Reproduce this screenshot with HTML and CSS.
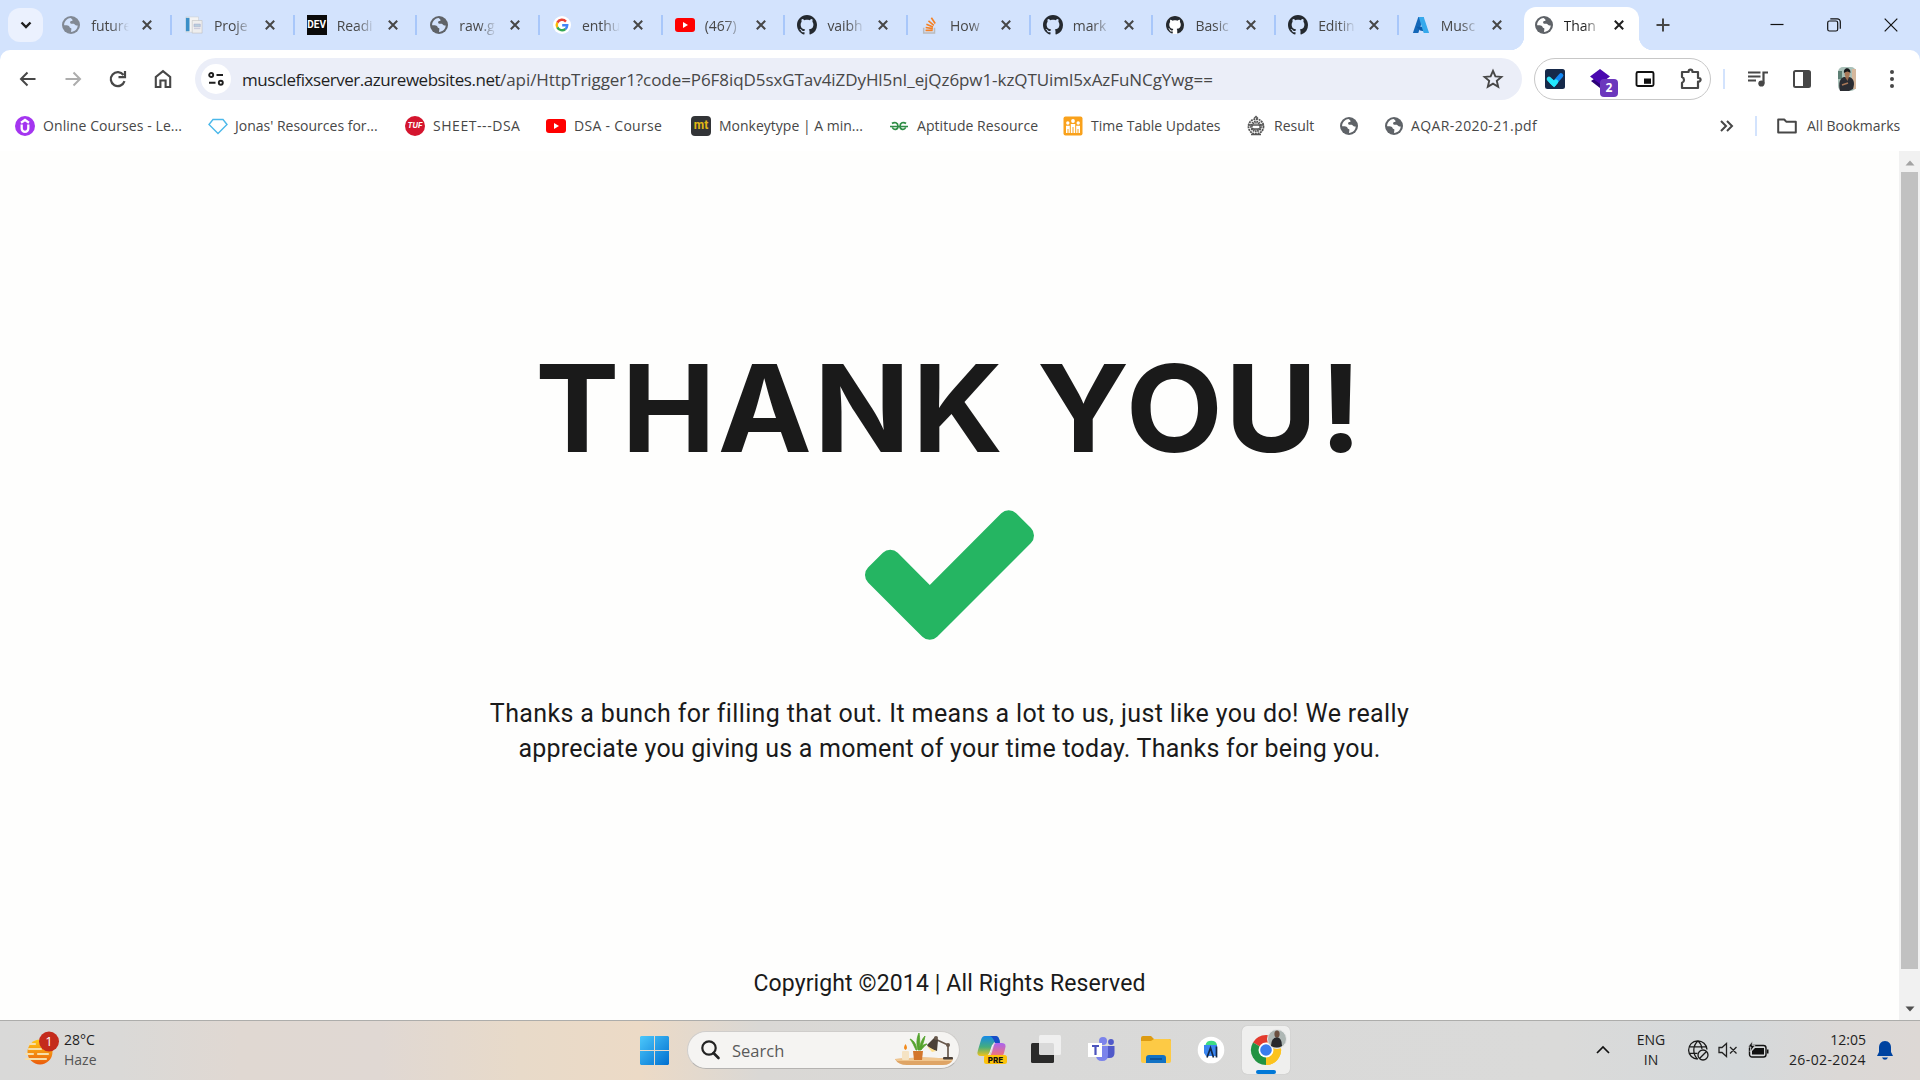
FILE: index.html
```html
<!DOCTYPE html>
<html lang="en">
<head>
<meta charset="utf-8">
<title>Thank You</title>
<link rel="stylesheet" href="styles.css">
</head>
<body>
<svg class="defs" aria-hidden="true">
  <symbol id="globe" viewBox="0 0 18 18"><circle cx="9" cy="9" r="9" fill="#5f6368"/><path d="M8.6 2c-2 .2-3.700 1-5 2.800C2 7 2 8.500 2.200 9.300c1.600-.3 3.800-.2 5 .9.600 1 .2 1.400 1.500 1.700.9.200.7 1.300.5 2.300l-.2 1.700c3.800-.2 6.600-3.200 6.700-6.500-1.300.1-2 .3-2.700-.6-.7-1-1.200-1.200-2.400-1.100-1.600.1-2.500-.3-2.500-1.300 0-1 .8-1.200 1.700-1.300.9-.2.900-.8.500-1.500-.4-.6-1-1.100-1.700-1.600z" fill="currentColor"/></symbol>
  <symbol id="close" viewBox="0 0 10 10"><path d="M.8.800l8.400 8.400M9.200.8L.8 9.200" stroke="currentColor" stroke-width="2" fill="none"/></symbol>
  <symbol id="github" viewBox="0 0 16 16"><path fill="#24292f" d="M8 0C3.580 0 0 3.580 0 8c0 3.540 2.290 6.530 5.470 7.590.4.070.55-.17.55-.38 0-.19-.01-.82-.01-1.490-2.010.37-2.530-.49-2.690-.94-.09-.23-.48-.94-.82-1.130-.28-.15-.68-.52-.01-.53.63-.01 1.080.58 1.230.82.72 1.210 1.870.87 2.330.66.070-.52.28-.87.51-1.070-1.780-.2-3.640-.89-3.640-3.950 0-.87.31-1.590.82-2.150-.08-.2-.36-1.020.08-2.120 0 0 .67-.21 2.200.82.64-.18 1.320-.27 2-.27s1.360.09 2 .27c1.530-1.040 2.200-.82 2.200-.82.44 1.100.16 1.920.08 2.120.51.56.82 1.270.82 2.150 0 3.070-1.870 3.750-3.650 3.950.29.25.54.73.54 1.480 0 1.070-.01 1.930-.01 2.200 0 .21.15.46.55.38A8.010 8.010 0 0 0 16 8c0-4.420-3.580-8-8-8z"/></symbol>
  <symbol id="youtube" viewBox="0 0 20 20"><rect y="3" width="20" height="14" rx="3" fill="#f00"/><path d="M8 7l5 3-5 3z" fill="#fff"/></symbol>
</svg>

<header class="tabstrip">
  <div class="tab-search"><svg width="12" height="8" viewBox="0 0 12 8"><path d="M1.500 1.500L6 6l4.500-4.500" fill="none" stroke="#1f1f1f" stroke-width="2.400"/></svg></div>
  <div class="tab"><svg class="fav dim"><use href="#globe"/></svg><span class="tab-title">future</span><svg class="x"><use href="#close"/></svg></div>
  <div class="tab"><svg class="fav" viewBox="0 0 20 20"><path d="M1 1h14v17H1z" fill="#f4f4f4" stroke="#c9ccd0" stroke-width=".6"/><path d="M1 2h4v15H1z" fill="#3b8fc8"/><path d="M8 5h11v14H8z" fill="#eee" stroke="#bbb" stroke-width=".6"/><path d="M10 9h7v3h-7zM10 14h7" fill="#b9cfdd" stroke="#aac" stroke-width=".6"/></svg><span class="tab-title">Proje</span><svg class="x"><use href="#close"/></svg></div>
  <div class="tab"><span class="fav dev">DEV</span><span class="tab-title">Readi</span><svg class="x"><use href="#close"/></svg></div>
  <div class="tab"><svg class="fav"><use href="#globe"/></svg><span class="tab-title">raw.g</span><svg class="x"><use href="#close"/></svg></div>
  <div class="tab"><svg class="fav" viewBox="0 0 20 20"><circle cx="10" cy="10" r="10" fill="#fff"/><g fill="none" stroke-width="2.700"><path d="M14.400 6.200A5.900 5.900 0 0 0 4.800 7.300" stroke="#ea4335"/><path d="M4.800 7.300a5.900 5.900 0 0 0 0 5.400" stroke="#fbbc05"/><path d="M4.800 12.700a5.900 5.900 0 0 0 9 1.800" stroke="#34a853"/><path d="M13.800 14.500a5.900 5.900 0 0 0 2-4.300h-5.600" stroke="#4285f4"/></g></svg><span class="tab-title">enthu</span><svg class="x"><use href="#close"/></svg></div>
  <div class="tab"><svg class="fav wide"><use href="#youtube"/></svg><span class="tab-title">(467)</span><svg class="x"><use href="#close"/></svg></div>
  <div class="tab"><svg class="fav wide"><use href="#github"/></svg><span class="tab-title">vaibh</span><svg class="x"><use href="#close"/></svg></div>
  <div class="tab"><svg class="fav" viewBox="0 0 20 20"><path d="M3 13v6h12v-6" fill="none" stroke="#bcbbbb" stroke-width="1.700"/><path d="M5 16h8M5.200 12.800l8 1.200M6 9.300l7.300 3M8.300 5.500l6 4.900M11.500 2l4.300 6.400" stroke="#f48024" stroke-width="1.800"/></svg><span class="tab-title">How</span><svg class="x"><use href="#close"/></svg></div>
  <div class="tab"><svg class="fav wide"><use href="#github"/></svg><span class="tab-title">mark</span><svg class="x"><use href="#close"/></svg></div>
  <div class="tab"><svg class="fav halo"><use href="#github"/></svg><span class="tab-title">Basic</span><svg class="x"><use href="#close"/></svg></div>
  <div class="tab"><svg class="fav wide"><use href="#github"/></svg><span class="tab-title">Editin</span><svg class="x"><use href="#close"/></svg></div>
  <div class="tab last"><svg class="fav" viewBox="0 0 20 20"><path d="M7 1h6L7 19H1z" fill="#1467b8"/><path d="M5 12h10l-2 5-4-1z" fill="#0a5bab"/><path d="M7.500 1H13l6 18h-6z" fill="#36a9ec"/></svg><span class="tab-title">Musc</span><svg class="x"><use href="#close"/></svg></div>
  <div class="tab active"><svg class="fav"><use href="#globe"/></svg><span class="tab-title">Than</span><svg class="x"><use href="#close"/></svg></div>
  <svg class="plus" viewBox="0 0 14 14"><path d="M7 .5v13M.5 7h13" stroke="#474747" stroke-width="2"/></svg>
  <div class="window-buttons">
    <svg viewBox="0 0 14 14"><path d="M.5 6.500h13" stroke="#111" stroke-width="1.200"/></svg>
    <svg viewBox="0 0 14 14"><rect x=".7" y="3" width="10" height="10" rx="1.800" fill="none" stroke="#111" stroke-width="1.200"/><path d="M3.300.8h7a3 3 0 0 1 3 3v7" fill="none" stroke="#111" stroke-width="1.200"/></svg>
    <svg viewBox="0 0 14 14"><path d="M.7.700l12.600 12.600M13.300.7L.7 13.300" stroke="#111" stroke-width="1.200"/></svg>
  </div>
</header>

<div class="toolbar-wrap">
<nav class="toolbar">
  <svg class="nav-ic" viewBox="0 0 20 20"><path d="M17.500 10H3.500M9.500 3.500L3 10l6.500 6.500" fill="none" stroke="#474747" stroke-width="2"/></svg>
  <svg class="nav-ic" viewBox="0 0 20 20"><path d="M2.500 10h14M10.500 3.500L17 10l-6.500 6.500" fill="none" stroke="#adadad" stroke-width="2"/></svg>
  <svg class="nav-ic" viewBox="0 0 20 20"><path d="M16.500 12.200A7 7 0 1 1 15.500 6M17 2v6.200h-6.500" fill="none" stroke="#474747" stroke-width="2.200"/></svg>
  <svg class="nav-ic" viewBox="0 0 20 20"><path d="M2.800 18V8L10 2.200 17.200 8v10h-4.600v-6.500H7.400V18z" fill="none" stroke="#474747" stroke-width="2.100"/></svg>
  <div class="omnibox">
    <div class="site-info"><svg width="16" height="14" viewBox="0 0 16 14"><g fill="none" stroke="#1f1f1f" stroke-width="1.900"><circle cx="3.200" cy="3" r="2"/><path d="M8.500 3H15M1 10.800h6.500"/><circle cx="12.800" cy="10.800" r="2"/></g></svg></div>
    <span class="url"><b>musclefixserver.azurewebsites.net</b>/api/HttpTrigger1?code=P6F8iqD5sxGTav4iZDyHl5nI_ejQz6pw1-kzQTUiml5xAzFuNCgYwg==</span>
    <svg class="star" viewBox="0 0 20 20"><path d="M10 1.800l2.400 5.600 6 .5-4.600 4 1.400 5.900L10 14.700l-5.200 3.100 1.400-5.900-4.600-4 6-.5z" fill="none" stroke="#474747" stroke-width="1.900"/></svg>
  </div>
  <div class="extensions">
    <svg viewBox="0 0 20 20"><rect width="20" height="20" rx="2.500" fill="#16294a"/><path d="M4 10l5 5" stroke="#2fe0f5" stroke-width="4.600" stroke-linecap="round"/><path d="M9 14.500l7-8" stroke="#1388f5" stroke-width="4.600" stroke-linecap="round"/><path d="M6.500 12.500L9 15l2-2.300" stroke="#22e8ff" stroke-width="4.600" stroke-linecap="round" fill="none"/></svg>
    <div class="ext-badged"><svg viewBox="0 0 20 20"><path d="M10 6l9 6-9 7-9-7z" fill="#2c0178"/><path d="M10 0l10 7.500L10 15 0 7.500z" fill="#4a08b0"/></svg><span class="ext-count">2</span></div>
    <svg viewBox="0 0 20 20"><rect x="1.500" y="3" width="17" height="14" rx="1.500" fill="none" stroke="#111" stroke-width="1.900"/><path d="M9 9.500h7v5.300H9z" fill="#111"/></svg>
    <svg viewBox="0 0 22 22"><path d="M2 4h6.600V3.500a1.900 1.900 0 0 1 3.800 0V4H18v6h.8a1.700 1.700 0 0 1 0 3.600H18V20H2v-5.200a3.100 3.100 0 0 0 0-5.800z" fill="none" stroke="#474747" stroke-width="2.200" stroke-linejoin="round"/></svg>
  </div>
  <i class="divider"></i>
  <svg class="t-ic media" viewBox="0 0 20 20"><path d="M0 3.500h12.500M0 7.500h12.500M0 11.500h8" stroke="#474747" stroke-width="2"/><path d="M15.500 14.500V3.500H20" stroke="#474747" stroke-width="2.200" fill="none"/><circle cx="13.400" cy="14.500" r="3.100" fill="#474747"/></svg>
  <svg class="t-ic panel" viewBox="0 0 20 20"><rect x="2" y="2" width="16" height="16" rx="1.500" fill="none" stroke="#474747" stroke-width="2"/><path d="M11 2h7v16h-7z" fill="#474747"/></svg>
  <svg class="profile" viewBox="0 0 18 24"><rect width="18" height="24" rx="5" fill="#a9c0b8"/><path d="M14 2h4v20h-4z" fill="#d5b79c"/><path d="M0 4h4v8H0z" fill="#5d7f74"/><path d="M2 24c-2-8 0-13 4-14h5c5 1 6 6 4 12l-4 2z" fill="#2b2d33"/><path d="M7 10h4l-1.500 4z" fill="#9a6b4f"/><ellipse cx="9.200" cy="6.500" rx="2.600" ry="4" fill="#a97858"/><path d="M6 6c-1-6 7-6.500 6.500 0-2-2-4-2-6.500 0z" fill="#17181a"/><path d="M4 18l6-2" stroke="#a97858" stroke-width="1.600"/></svg>
  <svg class="dots" viewBox="0 0 4 20"><g fill="#474747"><circle cx="2" cy="3" r="2"/><circle cx="2" cy="10" r="2"/><circle cx="2" cy="17" r="2"/></g></svg>
</nav>
</div>

<nav class="bookmarks">
  <a class="bm b1"><svg viewBox="0 0 20 20"><circle cx="10" cy="10" r="10" fill="#a435f0"/><path d="M6 6.700L10 4l4 2.700M6.700 8.500v4a3.300 3.300 0 0 0 6.600 0v-4" fill="none" stroke="#fff" stroke-width="2.300"/></svg><span>Online Courses - Le...</span></a>
  <a class="bm b2"><svg viewBox="0 0 20 20"><path d="M5 3.500h10l4 5-9 9-9-9z" fill="none" stroke="#4bb8ea" stroke-width="1.400"/></svg><span>Jonas' Resources for...</span></a>
  <a class="bm b3"><span class="tuf">TUF</span><span>SHEET---DSA</span></a>
  <a class="bm b4"><svg><use href="#youtube"/></svg><span>DSA - Course</span></a>
  <a class="bm b5"><span class="mt">mt</span><span>Monkeytype | A min...</span></a>
  <a class="bm b6"><svg viewBox="0 0 20 20"><g fill="none" stroke="#2f8d46" stroke-width="1.700"><path d="M3 7.500C5.500 5.500 9 6.800 9 10.300S4.800 14.600 3.300 11.500M1 10.500h18M17 7.500c-2.500-2-6-.7-6 2.800s4.200 4.300 5.700 1.200"/></g></svg><span>Aptitude Resource</span></a>
  <a class="bm b7"><svg viewBox="0 0 20 20"><rect x=".5" y=".5" width="19" height="19" rx="2" fill="#f9a11b"/><g fill="#fff"><circle cx="10" cy="5" r="1.900"/><circle cx="4.800" cy="7" r="1.700"/><circle cx="15.200" cy="7" r="1.700"/><path d="M7.800 8h4.400v9H7.800zM3 9.700h3.800V17H3zM13.200 9.700H17V17h-3.800z"/></g><path d="M10 11v6M5 13v4M15 13v4" stroke="#f9a11b"/></svg><span>Time Table Updates</span></a>
  <a class="bm b8"><svg viewBox="0 0 20 20"><g fill="none" stroke="#555"><circle cx="10" cy="10.500" r="7.500" stroke-width="1.800" stroke-dasharray="2 .7"/><circle cx="10" cy="10.500" r="4.500" stroke-width="2.800" stroke-dasharray="1.500 .6"/><path d="M8 2.500L10 .5l2 2M2 9h16M5 18.500h10M5 13h10" stroke-width="1.300"/></g></svg><span>Result</span></a>
  <a class="bm b9"><svg class="g"><use href="#globe"/></svg></a>
  <a class="bm b10"><svg class="g"><use href="#globe"/></svg><span>AQAR-2020-21.pdf</span></a>
  <svg class="more" viewBox="0 0 13 12"><path d="M1 1l5 5-5 5M7 1l5 5-5 5" fill="none" stroke="#474747" stroke-width="2"/></svg>
  <i class="divider"></i>
  <a class="bm all"><svg viewBox="0 0 20 20"><path d="M1.200 16.500v-13h6l2 2.200h9.600v10.800z" fill="none" stroke="#474747" stroke-width="2" stroke-linejoin="round"/></svg><span>All Bookmarks</span></a>
</nav>

<div class="viewport">
  <main class="page">
    <h1>THANK YOU!</h1>
    <svg class="check" viewBox="121 334 1550 1188"><path fill="#25b562" d="M1671 566q0 40-28 68l-724 724-136 136q-28 28-68 28t-68-28l-136-136-362-362q-28-28-28-68t28-68l136-136q28-28 68-28t68 28l294 295 656-657q28-28 68-28t68 28l136 136q28 28 28 68z"/></svg>
    <p class="message"><span class="line-one">Thanks a bunch for filling that out. It means a lot to us, just like you do! We really</span><br><span class="line-two">appreciate you giving us a moment of your time today. Thanks for being you.</span></p>
    <footer>Copyright ©2014 | All Rights Reserved</footer>
  </main>
  <div class="scrollbar">
    <svg viewBox="0 0 10 6"><path d="M5 .5l4.500 5h-9z" fill="#a3a3a3"/></svg>
    <i class="thumb"></i>
    <svg viewBox="0 0 10 6"><path d="M5 5.500L.5.500h9z" fill="#505050"/></svg>
  </div>
</div>

<footer class="taskbar">
  <div class="weather">
    <svg viewBox="0 0 30 36"><defs><linearGradient id="sun" x2="0" y2="1"><stop offset="0" stop-color="#ffc916"/><stop offset="1" stop-color="#ea5b0c"/></linearGradient></defs><circle cx="15" cy="22" r="12.500" fill="url(#sun)"/><g stroke="#f6dfaa" stroke-width="2.200" stroke-linecap="round"><path d="M5 14h5M4 19h12M1 24h7M13 24h10M1 29h20"/></g><circle cx="24" cy="11.500" r="10" fill="#c42b1c"/></svg>
    <span class="alert">1</span>
    <div class="w-text"><span>28°C</span><span class="cond">Haze</span></div>
  </div>
  <div class="dock">
    <svg class="win" viewBox="0 0 29 29"><defs><linearGradient id="wn" x2="1" y2="1"><stop offset="0" stop-color="#4cc8fb"/><stop offset="1" stop-color="#006fd0"/></linearGradient></defs><path d="M1 0h13v14H0V1zM15 0h13l1 1v13H15zM0 15h14v14H1l-1-1zM15 15h14v13l-1 1H15z" fill="url(#wn)"/></svg>
    <div class="search">
      <svg class="mag" viewBox="0 0 19 20"><circle cx="8" cy="8" r="6.700" fill="none" stroke="#222" stroke-width="2.200"/><path d="M12.500 13l5 5" stroke="#222" stroke-width="2.600" stroke-linecap="round"/></svg>
      <span>Search</span>
      <svg class="scene" viewBox="0 0 58 34"><path d="M0 26q29-3 58 0-2 6-10 6H12q-9 0-12-6z" fill="#dfa566"/><path d="M0 26q29-3 58 0l-1 2H2z" fill="#f0c68f"/><rect x="7" y="18" width="7" height="9" rx="1" fill="#f5e3c4"/><path d="M10.500 11c2 3 2 5 0 6-2-1-2-3 0-6z" fill="#f28a1c"/><path d="M18 18h10l-1 9h-8z" fill="#d3762c"/><path d="M22 17C21 10 18 7 15 6c3 4 4 7 6 11zM23 17c-2-7-1-13 1-17 1 6 1 11 0 17zM24 17c1-6 3-11 6-14-1 6-3 10-5 14zM25 17c1-4 4-6 7-6-3 2-4 4-6 6z" fill="#54a32d" stroke="#54a32d" stroke-width=".8"/><path d="M40 6l13 6v14" fill="none" stroke="#67584c" stroke-width="1.700"/><path d="M40 4l3 3-1 11c-4-1-9-3-10-6z" fill="#4b4037"/><circle cx="41" cy="5" r="2" fill="#67584c"/><circle cx="53" cy="12" r="2" fill="#67584c"/><path d="M32 13l9 5-4 1z" fill="#ffdf8a"/><rect x="48" y="24" width="10" height="2.500" rx="1" fill="#4b4037"/></svg>
    </div>
    <svg class="app a1" viewBox="0 0 30 30"><defs><linearGradient id="cp1" x2="0" y2="1"><stop offset="0" stop-color="#1489e8"/><stop offset=".55" stop-color="#45ad7d"/><stop offset="1" stop-color="#f0c31a"/></linearGradient><linearGradient id="cp2" x2="0" y2="1"><stop offset="0" stop-color="#a963f0"/><stop offset="1" stop-color="#fa7668"/></linearGradient></defs><path d="M8 1h11q3 0 4 6h-4c-3 0-3 2-4 5l-2 7q-1 2-4 2H4q-5 0-3-6l3-10q1-4 4-4z" fill="url(#cp1)"/><path d="M13 1h6q3 0 4 7h-5q-2-6-5-7z" fill="#174cc7"/><path d="M19 8h6q5 0 3 6l-1 4q-1 4-5 4H10c3 0 4-2 5-5l2-7q1-2 2-2z" fill="url(#cp2)"/><path d="M17 9l-5 12H9q3-1 4-5l2-6z" fill="#f4e6f6"/><rect x="7" y="20" width="23" height="9" rx="2.500" fill="#fcc30b"/><text class="pre" x="18.500" y="27.500" text-anchor="middle">PRE</text></svg>
    <svg class="app a2" viewBox="0 0 30 30"><rect x="0" y="8" width="23" height="20" rx="1.500" fill="#2a2a2a"/><rect x="8" y="0" width="22" height="20" rx="1.500" fill="#f1f1f1" fill-opacity=".88"/></svg>
    <svg class="app a3" viewBox="0 0 30 30"><circle cx="16" cy="6" r="4" fill="#7b83eb"/><circle cx="24" cy="7" r="2.900" fill="#5059c9"/><path d="M18 11h9.500v7q0 5-5 5H18z" fill="#5059c9"/><path d="M9 11h12v9q0 6-6 6t-6-6z" fill="#7b83eb"/><rect x="1" y="8" width="14" height="14" fill="#fff"/><path d="M5 11h7M8.500 11v9" stroke="#4b53bc" stroke-width="2.200"/></svg>
    <svg class="app a4" viewBox="0 0 30 30"><path d="M0 3q0-2 2-2h8l3 3h15q2 0 2 2v5H0z" fill="#dd9b12"/><path d="M0 6h10l3-2h15q2 0 2 2v20q0 2-2 2H2q-2 0-2-2z" fill="#fdca45"/><path d="M5 28v-5q0-3 3-3h14q3 0 3 3v5z" fill="#1272c4"/><path d="M9 24h12" stroke="#0a4a8c" stroke-width="1.500"/></svg>
    <svg class="app a5" viewBox="0 0 30 30"><circle cx="15" cy="15" r="13.300" fill="#fff"/><path d="M9.500 10a5.800 5 0 0 1 11.500 0z" fill="#3ddc84"/><path d="M8 10h13v11H10l-2-3z" fill="#3a86f0"/><path d="M11 22.500L14.500 13l3 9.500M20.500 11.500v11" fill="none" stroke="#12284a" stroke-width="1.700"/></svg>
    <div class="chrome-tile"><svg viewBox="0 0 48 48"><g transform="translate(24 24)"><path d="M0 0L-13-7.500A15 15 0 0 1 13-7.500z" fill="#e33b2e"/><path d="M0 0L13-7.500A15 15 0 0 1 0 15z" fill="#fcc31e"/><path d="M0 0L0 15A15 15 0 0 1-13-7.500z" fill="#229342"/><path d="M0-7.500H13A15 15 0 0 1 0 15l6.500-11z" fill="#fcc31e"/><circle r="7.500" fill="#fff"/><circle r="5.800" fill="#3b7ded"/></g><circle cx="35" cy="13" r="9.500" fill="#aeb7b4" stroke="#e8e8e8"/><path d="M29 20q0-8 6-9 5 1 5 9-5 3-11 0z" fill="#26282b"/><ellipse cx="35" cy="8" rx="2.600" ry="3.500" fill="#6b5040"/><rect x="14" y="44" width="20" height="4" rx="2" fill="#0078d7"/></svg></div>
  </div>
  <div class="tray">
    <svg class="chev" viewBox="0 0 14 8"><path d="M1 7l6-6 6 6" fill="none" stroke="#111" stroke-width="1.700"/></svg>
    <div class="lang"><span>ENG</span><span>IN</span></div>
    <svg class="net" viewBox="0 0 21 21"><g fill="none" stroke="#1a1a1a" stroke-width="1.300"><path d="M19 9.500A9.200 9.200 0 1 0 9.800 19.200M10 .8C4.500 6 4.500 14 9.500 19M10 .8c2.500 2.300 3.600 5 4 8M1.500 6.800h17M1.500 13.300h8"/><circle cx="15" cy="15" r="5"/><path d="M11.700 18.300l6.500-6.500"/></g></svg>
    <svg class="vol" viewBox="0 0 20 16"><path d="M1 5.500h3l4.500-4v13l-4.500-4H1zM12 5l6.500 6.500M18.500 5L12 11.500" fill="none" stroke="#222" stroke-width="1.300"/></svg>
    <svg class="bat" viewBox="0 0 21 18"><rect x="1.500" y="4.500" width="16.500" height="11.500" rx="2.500" fill="none" stroke="#111" stroke-width="1.400"/><path d="M7 7h9v6.500H4V10zM19 8.500h1.500v4H19z" fill="#111"/><path d="M4.500 0L0 6h3l-1 5 5-6.500H4z" fill="#111" stroke="#d8dadb" stroke-width=".7"/></svg>
    <div class="clock"><span>12:05</span><span class="date">26-02-2024</span></div>
    <svg class="bell" viewBox="0 0 16 19"><path d="M8 0c4 0 6 3 6 6.500V11l2 4H0l2-4V6.500C2 3 4 0 8 0zM5 16.500h6q-1 2.300-3 2.300t-3-2.300z" fill="#0043a0"/></svg>
  </div>
</footer>
</body>
</html>
```
FILE: styles.css
```css
* { box-sizing: border-box; }
body {
  margin: 0;
  width: 1920px;
  height: 1080px;
  overflow: hidden;
  display: flex;
  flex-direction: column;
  background: #fefefd;
  font-family: "Open Sans", "Noto Sans", sans-serif;
  color: #1f1f1f;
}
svg { display: block; flex: none; overflow: visible; }
.defs { position: absolute; width: 0; height: 0; }

/* Tab strip */
.tabstrip {
  height: 50px;
  flex: none;
  display: flex;
  align-items: center;
  background: #d3e3fd;
}
.tab-search {
  width: 35px;
  height: 34px;
  margin: 0 6.300px 0 8px;
  border-radius: 12px;
  background: #ebf1fe;
  display: grid;
  place-items: center;
  flex: none;
}
.tab {
  width: 122.700px;
  height: 50px;
  flex: none;
  display: flex;
  align-items: center;
  padding-left: 12px;
  background: linear-gradient(#a8c7fa, #a8c7fa) right center / 2px 20px no-repeat;
}
.tab.last { background: none; }
.fav { width: 20px; height: 20px; padding: 1px; color: #d3e3fd; flex: none; }
.fav.wide { padding: 0; }
.fav.dim { opacity: .7; }
.fav.halo { background: radial-gradient(#fff 62%, transparent 66%); }
.fav.dev {
  padding: 0;
  background: #0a0a0a;
  color: #fff;
  font: bold 10px/20px "Roboto", sans-serif;
  text-align: center;
}
.tab-title {
  width: 40px;
  flex: none;
  margin-left: 10px;
  white-space: nowrap;
  font-size: 14px;
  letter-spacing: -.1px;
  color: #474747;
  -webkit-mask-image: linear-gradient(90deg, #000 50%, transparent 95%);
  mask-image: linear-gradient(90deg, #000 50%, transparent 95%);
}
.x { width: 10px; height: 10px; margin-left: 11px; color: #474747; }
.tab.active {
  position: relative;
  width: 115px;
  height: 43px;
  margin: 7px 0 0 2px;
  padding: 0 0 7px 10px;
  border-radius: 12px 12px 0 0;
  background: #fff;
}
.tab.active .fav { color: #fff; }
.tab.active .tab-title { color: #1f1f1f; }
.tab.active .x { color: #1f1f1f; margin-left: 10px; }
.tab.active::before, .tab.active::after {
  content: "";
  position: absolute;
  bottom: 0;
  width: 14px;
  height: 14px;
}
.tab.active::before { left: -14px; background: radial-gradient(circle at 0 0, transparent 14px, #fff 14.500px); }
.tab.active::after { right: -14px; background: radial-gradient(circle at 100% 0, transparent 14px, #fff 14.500px); }
.plus { width: 14px; height: 14px; margin-left: 17px; }
.window-buttons { margin-left: auto; padding-right: 22px; display: flex; gap: 43px; }
.window-buttons svg { width: 14px; height: 14px; }

/* Toolbar */
.toolbar-wrap { background: #d3e3fd; flex: none; }
.toolbar {
  height: 58px;
  display: flex;
  align-items: center;
  padding-left: 18px;
  background: #fff;
  border-radius: 10px 10px 0 0;
}
.nav-ic { width: 20px; height: 20px; margin-right: 25px; }
.omnibox {
  width: 1327px;
  height: 42px;
  margin-left: -3px;
  padding: 0 19px 0 6px;
  border-radius: 21px;
  background: #ebeef8;
  display: flex;
  align-items: center;
}
.site-info {
  width: 30px;
  height: 30px;
  border-radius: 50%;
  background: #fff;
  display: grid;
  place-items: center;
  margin-right: 11px;
}
.url { font-size: 17px; letter-spacing: -.07px; color: #474747; white-space: nowrap; }
.url b { font-weight: 400; letter-spacing: -.46px; color: #1f1f1f; }
.star { width: 20px; height: 20px; margin-left: auto; }
.extensions {
  width: 177px;
  height: 42px;
  margin-left: 12px;
  padding: 0 8px 0 10px;
  border: 1px solid #c7c7c7;
  border-radius: 21px;
  display: flex;
  align-items: center;
  justify-content: space-between;
}
.extensions svg { width: 20px; height: 20px; }
.extensions > svg:last-child { width: 22px; height: 22px; }
.ext-badged { position: relative; }
.ext-count {
  position: absolute;
  left: 10px;
  top: 10px;
  width: 18px;
  height: 18px;
  border-radius: 4px;
  background: #6b37bd;
  color: #fff;
  font: bold 12px/18px "Open Sans", sans-serif;
  text-align: center;
}
.divider { width: 2px; height: 20px; background: #d3e3fd; flex: none; }
.toolbar .divider { margin-left: 12px; }
.t-ic { width: 20px; height: 20px; }
.media { margin-left: 23px; }
.panel { margin-left: 24px; }
.profile { width: 18px; height: 24px; margin-left: 26px; }
.dots { width: 4px; height: 20px; margin-left: 34px; }

/* Bookmarks */
.bookmarks {
  height: 43px;
  flex: none;
  display: flex;
  align-items: center;
  padding: 0 0 8px 15px;
  background: #fff;
}
.bm { display: flex; align-items: center; gap: 8px; flex: none; font-size: 14px; color: #474747; white-space: nowrap; }
.bm svg { width: 20px; height: 20px; }
.bm svg.g { width: 18px; height: 18px; color: #fff; }
.b1 { width: 193px; letter-spacing: .08px; }
.b2 { width: 197px; gap: 7px; }
.b3 { width: 141px; letter-spacing: .55px; }
.b4 { width: 145px; letter-spacing: .3px; }
.b5 { width: 198px; }
.b6 { width: 174px; letter-spacing: .06px; }
.b7 { width: 183px; }
.b8 { width: 94px; }
.b9 { width: 45px; }
.b10 { width: 335px; letter-spacing: .4px; }
.all { gap: 10px; }
.tuf, .mt { width: 20px; height: 20px; text-align: center; letter-spacing: 0; }
.tuf { border-radius: 50%; background: #d4152e; color: #fff; font: italic bold 7.500px/20px "Inter", sans-serif; }
.mt { border-radius: 4px; background: #323437; color: #e2b714; font: bold 12px/18px "Roboto", sans-serif; }
.more { width: 13px; height: 12px; }
.bookmarks .divider { margin: 0 20px 0 22px; }

/* Web page */
.viewport { height: 869px; flex: none; display: flex; }
.page { flex: 1; display: flex; flex-direction: column; align-items: center; color: #1a1a1a; }
h1 {
  margin: 184px 0 0;
  font: 700 120.700px/146px "Inter", sans-serif;
  letter-spacing: 2px;
  white-space: nowrap;
  transform: scaleX(1.045);
}
.check { width: 169px; height: 130px; margin-top: 29px; }
.message {
  margin: 56px 0 0;
  font: 25px/35px "Roboto", sans-serif;
  text-align: center;
  white-space: nowrap;
}
.line-one { letter-spacing: .365px; }
.line-two { letter-spacing: .23px; }
.page footer { margin-top: 203px; font: 23px/30px "Roboto", sans-serif; letter-spacing: .12px; }
.scrollbar {
  width: 21px;
  background: #f1f1f1;
  display: flex;
  flex-direction: column;
  align-items: center;
  padding: 9px 0 8px;
}
.scrollbar svg { width: 10px; height: 6px; }
.thumb { width: 17px; height: 797px; margin: 6px 0 auto; background: #c1c1c1; }

/* Taskbar */
.taskbar {
  height: 60px;
  flex: none;
  display: flex;
  align-items: center;
  padding-bottom: 1px;
  border-top: 1px solid #adadab;
  background: linear-gradient(90deg, #d9d9d8 0, #dad9d7 120px, #e0d8d2 240px, #e0d8d3 380px, #e8dac9 520px, #ecdac6 640px, #dad8d5 760px, #d9d9d8 1000px, #dadad9 1560px, #d5d9db 1740px, #dbd8d6 1840px, #ddd8d5 1920px);
}
.weather { position: relative; width: 640px; display: flex; padding-left: 25px; gap: 9px; }
.weather > svg { width: 30px; height: 36px; }
.alert { position: absolute; left: 39px; top: 1px; width: 20px; font: 13px/20px "Open Sans", sans-serif; text-align: center; color: #fff; }
.w-text { display: flex; flex-direction: column; font-size: 14px; line-height: 20px; }
.cond { color: #555; }
.dock { display: flex; align-items: center; width: 956px; }
.win { width: 29px; height: 29px; }
.search {
  width: 273px;
  height: 38px;
  margin-left: 18px;
  padding: 0 6px 0 13px;
  border-radius: 19px;
  border: 1px solid #cfcdcb;
  border-bottom-color: #b5b3b1;
  background: #f5f4f2;
  display: flex;
  align-items: center;
  font-size: 16.500px;
  color: #5a5a5a;
}
.mag { width: 19px; height: 20px; margin-right: 12px; }
.scene { width: 58px; height: 34px; margin-left: auto; }
.app { width: 30px; height: 30px; }
.pre { font: 800 8px "Inter", sans-serif; fill: #111; }
.a1 { margin-left: 17px; }
.a2 { margin-left: 24px; }
.a3 { margin-left: 26px; }
.a4 { margin-left: 24px; }
.a5 { margin-left: 25px; }
.chrome-tile { width: 48px; height: 48px; margin-left: 16px; border-radius: 5px; background: #efefee; box-shadow: 0 0 1px #aaa; }
.chrome-tile svg { width: 48px; height: 48px; }
.tray { display: flex; align-items: center; }
.chev { width: 14px; height: 8px; }
.lang { width: 30px; margin-left: 26px; display: flex; flex-direction: column; align-items: center; font-size: 14px; line-height: 20px; }
.net { width: 21px; height: 21px; margin-left: 22px; }
.vol { width: 20px; height: 16px; margin-left: 9px; }
.bat { width: 21px; height: 18px; margin-left: 10px; }
.clock { width: 97px; display: flex; flex-direction: column; align-items: flex-end; font-size: 14px; line-height: 20px; }
.date { letter-spacing: .4px; }
.bell { width: 16px; height: 19px; margin-left: 11px; }
```
